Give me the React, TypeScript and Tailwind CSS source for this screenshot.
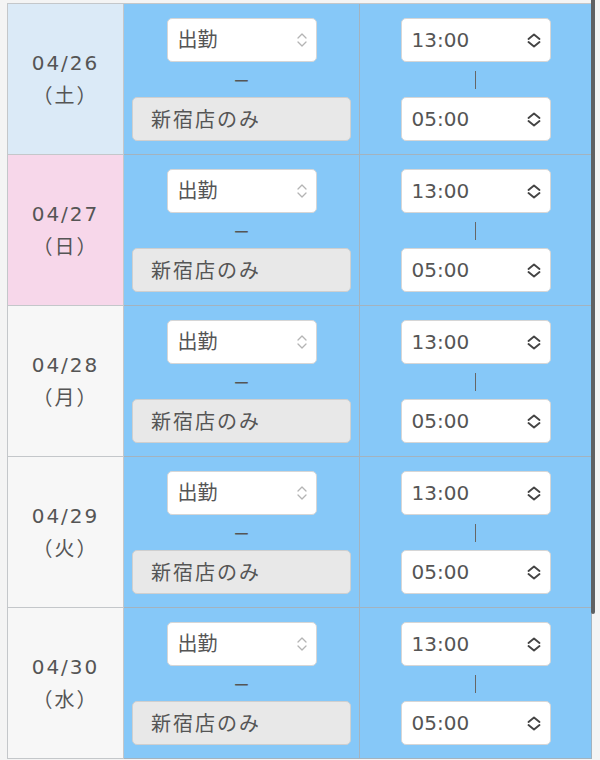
const days = [
  { date: '04/26', dow: '（土）', bg: 'bg-[#dbeaf7]' },
  { date: '04/27', dow: '（日）', bg: 'bg-[#f7d7ea]' },
  { date: '04/28', dow: '（月）', bg: 'bg-[#f7f7f7]' },
  { date: '04/29', dow: '（火）', bg: 'bg-[#f7f7f7]' },
  { date: '04/30', dow: '（水）', bg: 'bg-[#f7f7f7]' },
]

function LightChevrons() {
  return (
    <svg width="10" height="16" viewBox="0 0 10 16" fill="none" stroke="#b4b4b4" strokeWidth="1.3" strokeLinecap="round" strokeLinejoin="round">
      <path d="M1 6 L5 2 L9 6" />
      <path d="M1 10 L5 14 L9 10" />
    </svg>
  )
}

function DarkChevrons() {
  return (
    <svg width="14" height="15" viewBox="0 0 14 15" fill="none" stroke="#444" strokeWidth="1.9" strokeLinecap="round" strokeLinejoin="round">
      <path d="M1.5 6 L7 1.5 L12.5 6" />
      <path d="M1.5 9 L7 13.5 L12.5 9" />
    </svg>
  )
}

function SelectBox({ value, dark }: { value: string; dark?: boolean }) {
  return (
    <div className="w-[150px] h-[44px] mx-auto flex items-center justify-between bg-white rounded-[5px] border border-[#d6d6d6] pl-[10px] pr-[9px] text-[20px] text-[#555]">
      <span>{value}</span>
      {dark ? <DarkChevrons /> : <LightChevrons />}
    </div>
  )
}

export default function App() {
  return (
    <div
      className="relative h-[760px] overflow-hidden bg-[#f4f4f4] pt-[3px] pl-[7px]"
      style={{ fontFamily: '"DejaVu Sans", "Noto Sans CJK JP", sans-serif' }}
    >
      <div className="w-[585px] border-l border-t border-[#c4c7ca]">
        {days.map((d) => (
          <div key={d.date} className="grid grid-cols-[116px_236px_232px] h-[151px]">
            {/* Date */}
            <div className={`${d.bg} border-r border-b border-[#c4c7ca] flex flex-col items-center justify-center leading-8 text-[20px] tracking-[2px] text-[#555]`}>
              <span>{d.date}</span>
              <span style={{ fontFamily: '"Noto Sans CJK JP", sans-serif' }}>{d.dow}</span>
            </div>

            {/* Status / shop */}
            <div className="bg-[#86c8f8] border-r border-b border-[#a3b3bf] flex flex-col pt-[14px]">
              <SelectBox value="出勤" />
              <div className="h-[35px] flex items-center justify-center">
                <span className="text-[16px] leading-none text-[#555]" style={{ fontFamily: '"Noto Sans CJK JP", sans-serif' }}>ー</span>
              </div>
              <div className="mx-2 h-[44px] flex items-center rounded-[5px] border border-[#cfcfcf] bg-[#e8e8e8] pl-[18px] text-[20px] tracking-[2px] text-[#555]" style={{ fontFamily: '"Noto Sans CJK JP", sans-serif' }}>
                新宿店のみ
              </div>
            </div>

            {/* Times */}
            <div className="bg-[#86c8f8] border-r border-b border-[#a3b3bf] flex flex-col pt-[14px]">
              <SelectBox value="13:00" dark />
              <div className="h-[35px] flex items-center justify-center">
                <div className="w-px h-[18px] bg-[#666]" />
              </div>
              <SelectBox value="05:00" dark />
            </div>
          </div>
        ))}
      </div>

      {/* overlay scrollbar */}
      <div className="absolute top-0 right-[5px] w-[4px] h-[614px] rounded-b-full bg-[#5f6163]" />
    </div>
  )
}
